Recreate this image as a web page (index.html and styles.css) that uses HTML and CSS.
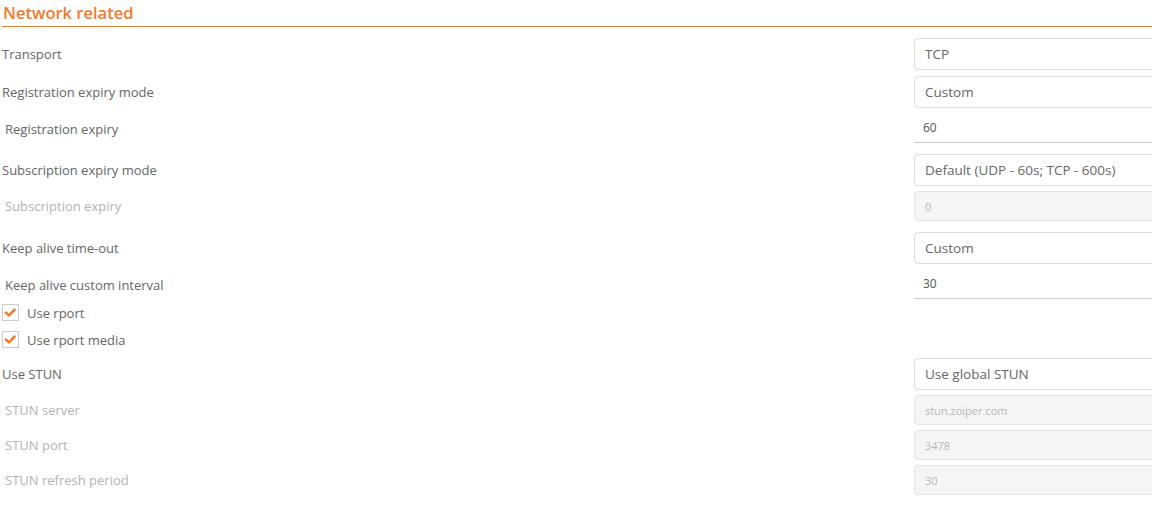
FILE: index.html
```html
<!DOCTYPE html>
<html>
<head>
<meta charset="utf-8">
<link rel="stylesheet" href="styles.css">
</head>
<body>
<div class="page">
  <h2 class="section-title">Network related</h2>
  <div class="form">
    <div class="row row-select r-first">
      <span class="label">Transport</span>
      <div class="field select">TCP</div>
    </div>
    <div class="row row-select">
      <span class="label">Registration expiry mode</span>
      <div class="field select">Custom</div>
    </div>
    <div class="row row-input">
      <span class="label indent">Registration expiry</span>
      <div class="field input">60</div>
    </div>
    <div class="row row-select r-after-input">
      <span class="label">Subscription expiry mode</span>
      <div class="field select">Default (UDP - 60s; TCP - 600s)</div>
    </div>
    <div class="row row-disabled">
      <span class="label indent muted">Subscription expiry</span>
      <div class="field disabled">0</div>
    </div>
    <div class="row row-select r-after-input">
      <span class="label">Keep alive time-out</span>
      <div class="field select">Custom</div>
    </div>
    <div class="row row-input">
      <span class="label indent">Keep alive custom interval</span>
      <div class="field input">30</div>
    </div>
    <div class="row row-check cb-first">
      <span class="checkbox"><svg viewBox="0 0 17 17" width="17" height="17"><path d="M4 8.6 L7 11.4 L12.6 5.6" fill="none" stroke="#f07a2c" stroke-width="2.6" stroke-linecap="round" stroke-linejoin="round"/></svg></span>
      <span class="label check-label">Use rport</span>
    </div>
    <div class="row row-check">
      <span class="checkbox"><svg viewBox="0 0 17 17" width="17" height="17"><path d="M4 8.6 L7 11.4 L12.6 5.6" fill="none" stroke="#f07a2c" stroke-width="2.6" stroke-linecap="round" stroke-linejoin="round"/></svg></span>
      <span class="label check-label">Use rport media</span>
    </div>
    <div class="row row-select r-after-check">
      <span class="label">Use STUN</span>
      <div class="field select">Use global STUN</div>
    </div>
    <div class="row row-disabled">
      <span class="label indent muted">STUN server</span>
      <div class="field disabled">stun.zoiper.com</div>
    </div>
    <div class="row row-disabled">
      <span class="label indent muted">STUN port</span>
      <div class="field disabled">3478</div>
    </div>
    <div class="row row-disabled">
      <span class="label indent muted">STUN refresh period</span>
      <div class="field disabled">30</div>
    </div>
  </div>
</div>
</body>
</html>
```
FILE: styles.css
```css
html, body {
  margin: 0;
  padding: 0;
  background: #ffffff;
  overflow: hidden;
}
body {
  font-family: "Open Sans", "Noto Sans", sans-serif;
  color: #666666;
  font-size: 13px;
}
.page {
  width: 1152px;
  height: 513px;
  overflow: hidden;
}
.section-title {
  margin: 0 0 0 2px;
  height: 26px;
  line-height: 26px;
  font-size: 16.5px;
  font-weight: 600;
  color: #f27a2e;
  border-bottom: 1px solid #e8813a;
  padding-left: 1px;
  box-sizing: content-box;
}
.form {
  display: flex;
  flex-direction: column;
}
.row {
  display: flex;
  align-items: center;
  position: relative;
}
.label {
  flex: 1;
  padding-left: 2px;
  color: #666666;
}
.label.indent { padding-left: 5px; }
.row-input .label { padding-top: 2px; }
.label.muted { color: #b3b3b3; }
.field {
  width: 260px;
  flex: none;
  box-sizing: border-box;
  display: flex;
  align-items: center;
  margin-right: -22px;
}
.row-select { height: 32px; margin-top: 6px; }
.r-first { margin-top: 11px; }
.r-after-input { margin-top: 11px; }
.r-after-check { margin-top: 10px; }
.row-select .field {
  height: 32px;
  border: 1px solid #dddddd;
  border-radius: 4px;
  padding-left: 10px;
  font-size: 13.5px;
  color: #666666;
  background: #fff;
}
.row-input { height: 31px; margin-top: 4px; }
.row-input .field {
  height: 31px;
  border-bottom: 1px solid #cccccc;
  padding-left: 9px;
  font-size: 12px;
  color: #555555;
}
.row-disabled { height: 30px; margin-top: 5px; }
.row-input + .row-disabled { margin-top: 11px; }
.row-select + .row-disabled { margin-top: 5px; }
.row-disabled .field {
  height: 30px;
  border: 1px solid #e4e4e4;
  border-radius: 4px;
  background: #f5f5f5;
  padding-left: 10px;
  font-size: 11px;
  color: #b8b8b8;
}
.row-check { height: 17px; margin-top: 10px; }
.cb-first { margin-top: 5px; }
.checkbox {
  flex: none;
  width: 17px;
  height: 17px;
  margin-left: 2px;
  box-sizing: border-box;
  border: 1px solid #cccccc;
  background: #fff;
  position: relative;
}
.checkbox svg {
  position: absolute;
  left: -1px;
  top: -1px;
}
.check-label {
  padding-left: 8px;
  flex: 1;
}
```
